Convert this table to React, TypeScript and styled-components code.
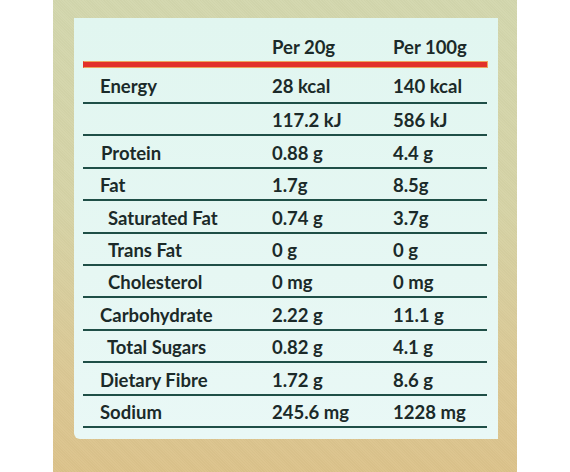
import React from "react";
import styled, { createGlobalStyle } from "styled-components";

const GlobalStyle = createGlobalStyle`
  html, body {
    margin: 0;
    padding: 0;
    background: #ffffff;
  }
  body {
    font-family: Lato, "Open Sans", "Liberation Sans", sans-serif;
  }
`;

const Frame = styled.div`
  box-sizing: border-box;
  margin-left: 53px;
  width: 464px;
  height: 472px;
  padding: 18px 19px 0 21px;
  background:
    repeating-linear-gradient(45deg, rgba(255, 255, 255, 0.025) 0 1px, rgba(0, 0, 0, 0.015) 1px 2px),
    linear-gradient(180deg, #d3d7ae 0%, #d6d3a6 45%, #dbc894 80%, #dcc38b 100%);
`;

const Panel = styled.div`
  box-sizing: border-box;
  height: 421px;
  padding: 0 11px 0 9px;
  background: linear-gradient(180deg, #e1f6f0 0%, #e6f7f3 60%, #e9f8f6 100%);
  border-bottom-left-radius: 6px;
`;

const Header = styled.div`
  display: grid;
  grid-template-columns: 189px 121px 1fr;
  align-items: end;
  height: 43px;
  padding-bottom: 5px;
  box-sizing: border-box;
`;

const RedRule = styled.div`
  box-sizing: border-box;
  height: 7px;
  margin-right: -1px;
  background: #e2302a;
  border: 1px solid #eea45c;
  border-left-color: #e2302a;
`;

const Row = styled.div<{ $first?: boolean }>`
  display: grid;
  grid-template-columns: 189px 121px 1fr;
  align-items: center;
  box-sizing: border-box;
  height: ${(p) => (p.$first ? "36px" : "32.4px")};
  padding-top: 3px;
  border-bottom: 2px solid #1f4f47;
`;

const Cell = styled.div<{ $indent?: number }>`
  font-size: 18.5px;
  font-weight: 700;
  line-height: 1;
  color: #1b2a29;
  white-space: nowrap;
  padding-left: ${(p) => (p.$indent ? `${p.$indent}px` : "0")};
`;

type Item = { name: string; indent: number; a: string; b: string };

const items: Item[] = [
  { name: "Energy", indent: 17, a: "28 kcal", b: "140 kcal" },
  { name: "", indent: 17, a: "117.2 kJ", b: "586 kJ" },
  { name: "Protein", indent: 18, a: "0.88 g", b: "4.4 g" },
  { name: "Fat", indent: 17, a: "1.7g", b: "8.5g" },
  { name: "Saturated Fat", indent: 25, a: "0.74 g", b: "3.7g" },
  { name: "Trans Fat", indent: 25, a: "0 g", b: "0 g" },
  { name: "Cholesterol", indent: 25, a: "0 mg", b: "0 mg" },
  { name: "Carbohydrate", indent: 17, a: "2.22 g", b: "11.1 g" },
  { name: "Total Sugars", indent: 24, a: "0.82 g", b: "4.1 g" },
  { name: "Dietary Fibre", indent: 17, a: "1.72 g", b: "8.6 g" },
  { name: "Sodium", indent: 17, a: "245.6 mg", b: "1228 mg" },
];

export default function App() {
  return (
    <>
      <GlobalStyle />
      <Frame>
        <Panel>
          <Header>
            <Cell />
            <Cell>Per 20g</Cell>
            <Cell>Per 100g</Cell>
          </Header>
          <RedRule />
          {items.map((it, i) => (
            <Row key={i} $first={i === 0}>
              <Cell $indent={it.indent}>{it.name}</Cell>
              <Cell>{it.a}</Cell>
              <Cell>{it.b}</Cell>
            </Row>
          ))}
        </Panel>
      </Frame>
    </>
  );
}
